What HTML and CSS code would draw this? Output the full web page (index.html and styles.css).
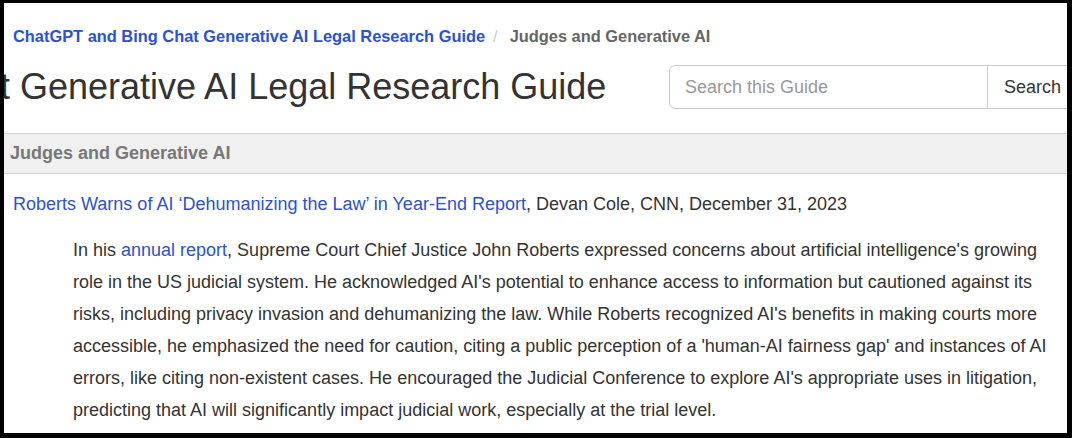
FILE: index.html
```html
<!DOCTYPE html>
<html lang="en">
<head>
<meta charset="utf-8">
<title>Judges and Generative AI</title>
<link rel="stylesheet" href="styles.css">
</head>
<body>
<div class="frame">
  <nav class="breadcrumb">
    <a class="crumb-link" href="#">ChatGPT and Bing Chat Generative AI Legal Research Guide</a><span class="crumb-sep">/</span><span class="crumb-active">Judges and Generative AI</span>
  </nav>
  <header class="header">
    <h1 class="title">t Generative AI Legal Research Guide</h1>
    <form class="search">
      <input class="search-input" type="text" placeholder="Search this Guide">
      <button class="search-btn" type="button">Search</button>
    </form>
  </header>
  <div class="bar">Judges and Generative AI</div>
  <div class="content">
    <p class="cite"><a class="link" href="#">Roberts Warns of AI ‘Dehumanizing the Law’ in Year-End Report</a>, Devan Cole, CNN, December 31, 2023</p>
    <p class="summary">In his <a class="link" href="#">annual report</a>, Supreme Court Chief Justice John Roberts expressed concerns about artificial intelligence's growing role in the US judicial system. He acknowledged AI's potential to enhance access to information but cautioned against its risks, including privacy invasion and dehumanizing the law. While Roberts recognized AI's benefits in making courts more accessible, he emphasized the need for caution, citing a public perception of a 'human-AI fairness gap' and instances of AI errors, like citing non-existent cases. He encouraged the Judicial Conference to explore AI's appropriate uses in litigation, predicting that AI will significantly impact judicial work, especially at the trial level.</p>
  </div>
</div>
</body>
</html>
```

FILE: styles.css
```css
html, body {
  margin: 0;
  padding: 0;
  background: #000;
}
body {
  font-family: "Liberation Sans", Arial, sans-serif;
  color: #333;
}
.frame {
  margin: 3px 5px 5px 4px;
  height: 430px;
  background: #fff;
  overflow: hidden;
}
.breadcrumb {
  padding: 23px 0 0 9px;
  font-size: 16.4px;
  line-height: 20px;
  font-weight: bold;
  white-space: nowrap;
}
.crumb-link {
  color: #2a52d4;
  text-decoration: none;
}
.crumb-sep {
  color: #ccc;
  font-weight: normal;
  padding: 0 12px 0 8px;
}
.crumb-active {
  color: #666;
}
.header {
  display: flex;
  align-items: center;
  padding: 19px 0 24px 0;
}
.title {
  flex: none;
  width: 669px;
  margin: 0 0 0 -4px;
  font-size: 36px;
  line-height: 1.1;
  font-weight: normal;
  color: #333;
  white-space: nowrap;
}
.search {
  flex: none;
  display: flex;
  margin: 0;
}
.search-input {
  box-sizing: border-box;
  width: 319px;
  height: 44px;
  padding: 0 15px;
  border: 1px solid #ccc;
  border-radius: 6px 0 0 6px;
  font-family: inherit;
  font-size: 18px;
  color: #333;
  outline: none;
}
.search-input::placeholder {
  color: #999;
}
.search-btn {
  box-sizing: border-box;
  height: 44px;
  padding: 0 16px;
  margin-left: -1px;
  border: 1px solid #ccc;
  border-radius: 0 6px 6px 0;
  background: #fff;
  font-family: inherit;
  font-size: 18px;
  color: #333;
}
.bar {
  border-top: 1px solid #d4d4d4;
  border-bottom: 1px solid #d4d4d4;
  background: #f0f0f0;
  padding-left: 6px;
  line-height: 39px;
  font-size: 18px;
  font-weight: bold;
  color: #777;
}
.content {
  padding: 14px 15px 0 9px;
  font-size: 18px;
  line-height: 32px;
}
.cite {
  margin: 0;
}
.summary {
  margin: 14px 0 0 60px;
}
.link {
  color: #2a52d4;
  text-decoration: none;
}
```
